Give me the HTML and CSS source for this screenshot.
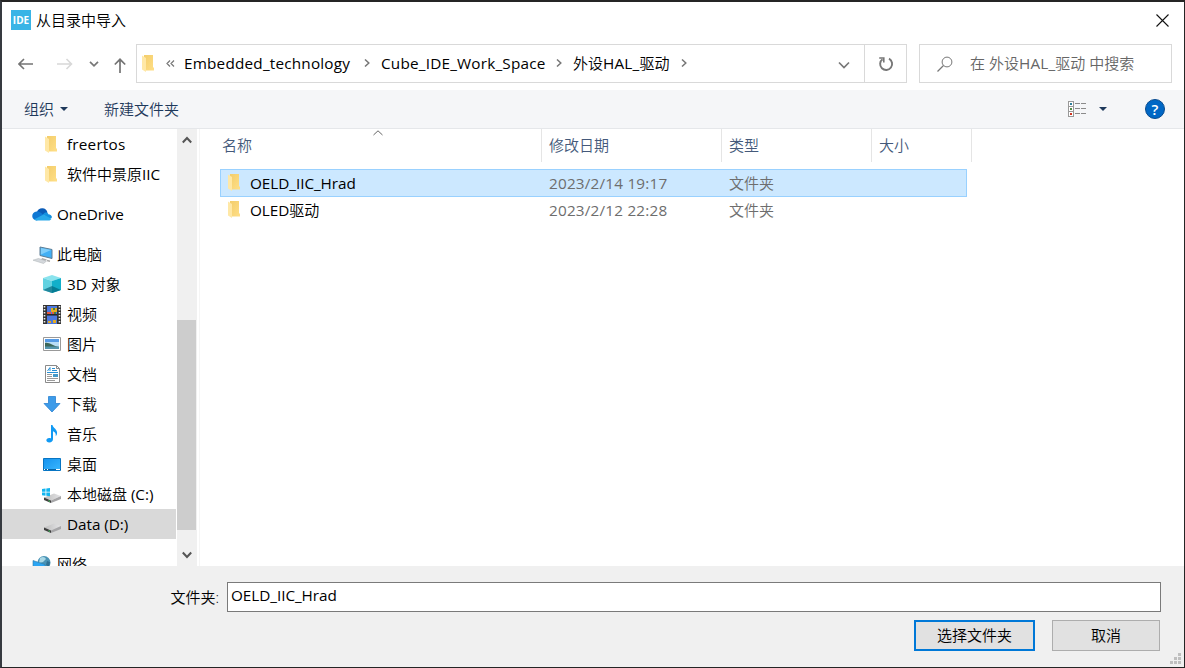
FILE: index.html
```html
<!DOCTYPE html>
<html lang="zh-CN">
<head>
    <meta charset="UTF-8">
    <meta name="viewport" content="width=device-width, initial-scale=1.0">
    <title>从目录中导入</title>
    <link rel="stylesheet" href="styles.css">
</head>
<body>
    <!-- Shared icons -->
    <svg class="defs" width="0" height="0">
        <defs>
            <linearGradient id="fold" x1="0" y1="0" x2="1" y2="1">
                <stop offset="0" stop-color="#f3cd6b"/>
                <stop offset="1" stop-color="#ffdf87"/>
            </linearGradient>
            <linearGradient id="drive-top" x1="0" y1="0" x2="1" y2="0">
                <stop offset="0" stop-color="#bdbdbd"/>
                <stop offset="1" stop-color="#e4e4e6"/>
            </linearGradient>
            <linearGradient id="screen" x1="0" y1="0" x2="1" y2="1">
                <stop offset="0" stop-color="#1592ee"/>
                <stop offset="1" stop-color="#3ab8ff"/>
            </linearGradient>
            <symbol id="folder" viewBox="0 0 12 17">
                <path d="M2 0h9v12l1 1v2.500H4L2 13z" fill="url(#fold)"/>
                <path d="M0 0.500L4 3v14L0 14.500z" fill="#ffe8a6"/>
            </symbol>
            <symbol id="drive" viewBox="0 0 18 10">
                <path d="M1 4.500L11 0.500l7 2.500L8 7.500z" fill="url(#drive-top)"/>
                <path d="M1 4.500l7 3V10l-7-3z" fill="#3e3e3e"/>
                <path d="M8 7.500L18 3v3L8 10z" fill="#a6a6a8"/>
                <path d="M5.500 7.800l1.500.6" stroke="#3fd35f"/>
            </symbol>
        </defs>
    </svg>

    <div class="dialog">
        <div class="title-bar">
            <div class="app-icon">IDE</div>
            <h1>从目录中导入</h1>
            <svg class="close" width="13" height="13" viewBox="0 0 13 13"><path d="M.5.500l12 12M12.500.500l-12 12" stroke="#111" stroke-width="1.100"/></svg>
        </div>

        <div class="nav-bar">
            <div class="nav-buttons">
                <svg width="16" height="12" viewBox="0 0 16 12"><path d="M1 6h14M6 1L1 6l5 5" fill="none" stroke="#747474" stroke-width="1.600"/></svg>
                <svg class="forward" width="16" height="12" viewBox="0 0 16 12"><path d="M0 6h14M9.500 1l5 5-5 5" fill="none" stroke="#d8d8d8" stroke-width="1.600"/></svg>
                <svg class="recent" width="10" height="6" viewBox="0 0 10 6"><path d="M1 .8l4 4 4-4" fill="none" stroke="#777" stroke-width="1.700"/></svg>
                <svg class="up" width="12" height="15" viewBox="0 0 12 15"><path d="M6 15V1.500M.8 6.500L6 1.300l5.200 5.200" fill="none" stroke="#747474" stroke-width="1.700"/></svg>
            </div>
            <div class="address">
                <div class="crumbs">
                    <svg class="folder" width="12" height="17"><use href="#folder"/></svg>
                    <svg class="more" width="9" height="7" viewBox="0 0 9 7"><path d="M4 .5l-3 3 3 3M8 .5l-3 3 3 3" fill="none" stroke="#777" stroke-width="1.200"/></svg>
                    <span class="crumb crumb-1"><span class="en">Embedded_technology</span></span>
                    <svg class="arrow" width="6" height="8" viewBox="0 0 6 8"><path d="M1 .5L4.800 4 1 7.500" fill="none" stroke="#777" stroke-width="1.500"/></svg>
                    <span class="crumb crumb-2"><span class="en">Cube_IDE_Work_Space</span></span>
                    <svg class="arrow" width="6" height="8" viewBox="0 0 6 8"><path d="M1 .5L4.800 4 1 7.500" fill="none" stroke="#777" stroke-width="1.500"/></svg>
                    <span class="crumb crumb-3">外设<span class="en">HAL_</span>驱动</span>
                    <svg class="arrow" width="6" height="8" viewBox="0 0 6 8"><path d="M1 .5L4.800 4 1 7.500" fill="none" stroke="#777" stroke-width="1.500"/></svg>
                </div>
                <svg class="drop" width="12" height="8" viewBox="0 0 12 8"><path d="M1 1.500l5 5 5-5" fill="none" stroke="#777" stroke-width="1.700"/></svg>
                <div class="refresh">
                    <svg width="16" height="16" viewBox="0 0 16 16"><path d="M11 2.700A6 6 0 1 1 4.500 3.200" fill="none" stroke="#777" stroke-width="1.900"/><path d="M1.200 2h4.600v4.600" fill="none" stroke="#777" stroke-width="1.600"/></svg>
                </div>
            </div>
            <div class="search">
                <svg width="16" height="16" viewBox="0 0 16 16"><circle cx="10" cy="6" r="4.900" fill="none" stroke="#777"/><path d="M6.500 9.500L.5 15.500" stroke="#777" stroke-width="1.200"/></svg>
                <span>在 外设<span class="en">HAL_</span>驱动 中搜索</span>
            </div>
        </div>

        <div class="toolbar">
            <span>组织</span>
            <i class="caret"></i>
            <span class="new-folder">新建文件夹</span>
            <svg class="view-icon" width="19" height="16" viewBox="0 0 19 16" shape-rendering="crispEdges">
                <path d="M.5.500h5v15h-5zM.5 5.500h5M.5 10.500h5" fill="#fff" stroke="#999"/>
                <path d="M7 2.500h5m1 0h5M7 7.500h5m1 0h5M7 12.500h5m1 0h5" stroke="#8b8b8b"/>
                <path d="M2 2h2v2H2z" fill="#2f7f9b"/>
                <path d="M2 7h2v2H2z" fill="#548a45"/>
                <path d="M2 12h2v2H2z" fill="#cf3420"/>
            </svg>
            <i class="caret view-caret"></i>
            <div class="help">?</div>
        </div>

        <div class="content">
            <ul class="tree">
                <li class="child"><svg class="folder" width="12" height="17"><use href="#folder"/></svg><span class="en">freertos</span></li>
                <li class="child"><svg class="folder" width="12" height="17"><use href="#folder"/></svg><span>软件中景原<span class="en caps">IIC</span></span></li>
                <li class="root">
                    <svg width="20" height="14" viewBox="0 0 20 14">
                        <path d="M5 5a5.500 5.500 0 0 1 10.500.500L10 10 3 7z" fill="#0a5cb8"/>
                        <path d="M5 13.500A4.500 4.500 0 0 1 4.500 4.500C7 4 9 6 12 8l-7 5.500z" fill="#0f78d4"/>
                        <path d="M11 7.500c1.500-3 5-2.500 5.300-.3 2 .1 3.700 1.500 3.700 3.300L17 12z" fill="#1490df"/>
                        <path d="M2 12.500L11.500 7.500l8 4.200c-.6 1.200-1.500 1.800-3 1.800H5c-1.200 0-2.200-.4-3-1z" fill="#28a8ea"/>
                    </svg>
                    <span class="en caps">OneDrive</span>
                </li>
                <li class="root">
                    <svg class="pc" width="20" height="18" viewBox="0 0 20 18">
                        <path d="M7 1l12 2.500v9L7 9.500z" fill="#42b0f5" stroke="#5e7d94"/>
                        <path d="M8 2l10 2.100L8 8.500z" fill="#80cefa"/>
                        <path d="M9 12l5 1.500-2 1.500-4-1z" fill="#aaa"/>
                        <path d="M0 14.200l5.500-1.700 8 2.500-3 2.500z" fill="#d4d8dc" stroke="#b6babe" stroke-width=".6"/>
                        <path d="M14 14.500l3 .8" stroke="#aaa" stroke-width="1.500"/>
                    </svg>
                    此电脑
                </li>
                <li class="child">
                    <svg width="18" height="18" viewBox="0 0 18 18">
                        <path d="M0 3l9-3 9 3-9 3z" fill="#8ae3ed"/>
                        <path d="M0 3l9 3v12l-9-3z" fill="#62d2e1"/>
                        <path d="M9 6l9-3v12l-9 3z" fill="#12afca"/>
                        <path d="M0 15l9-4v7z" fill="#22889d"/>
                        <path d="M9 11l9 4-9 3z" fill="#067c94"/>
                    </svg>
                    <span><span class="en caps">3D</span> 对象</span>
                </li>
                <li class="child">
                    <svg width="18" height="19" viewBox="0 0 18 19">
                        <path d="M0 0h18v19H0z" fill="#333"/>
                        <path d="M1.500 1v18M16.500 1v18" stroke="#eee" stroke-width="1.600" stroke-dasharray="1.500 1.500"/>
                        <path d="M4 1h10v8H4zM4 10.500h10V19H4z" fill="#4c78df"/>
                        <path d="M4 7h4v2H4zM9 6h3v3H9z" fill="#e8583c"/>
                        <path d="M8 3h6v4H8zM5 16h3v2H5zM10 15h3v3h-3z" fill="#e5ac22"/>
                        <path d="M10 3h2v2h-2zM11 7h2v2h-2z" fill="#46833d"/>
                        <path d="M4 9.700h10" stroke="#252525"/>
                    </svg>
                    视频
                </li>
                <li class="child">
                    <svg width="18" height="14" viewBox="0 0 18 14">
                        <path d="M.5.500h17v13H.5z" fill="#fff" stroke="#999"/>
                        <path d="M2 2h14v10H2z" fill="#b9ddf7"/>
                        <path d="M2 2h14v3H2z" fill="#569be6"/>
                        <path d="M2 6c4-1 8 3 14 4H2z" fill="#3c6759"/>
                        <path d="M2 9.500h14V12H2z" fill="#5595ad"/>
                    </svg>
                    图片
                </li>
                <li class="child">
                    <svg class="narrow" width="15" height="18" viewBox="0 0 15 18">
                        <path d="M.5.500h11l3 3v14H.5z" fill="#fff" stroke="#8a8a8a"/>
                        <path d="M11.500.500v3h3" fill="none" stroke="#8a8a8a"/>
                        <path d="M2.500 6l2.500-3.500V6M7 3.500h3M7 5.500h5M2 7.500h11" fill="none" stroke="#268fd4"/>
                        <path d="M2 9.500h5M2 11.500h5M2 13.500h11M2 15.500h8" stroke="#9a9a9a"/>
                        <path d="M8 9h5v3H8z" fill="#4599c9"/>
                    </svg>
                    文档
                </li>
                <li class="child">
                    <svg width="18" height="17" viewBox="0 0 18 17"><path d="M5.500.500h7v7H17L9 16 1 7.500h4.500z" fill="#3d9be9" stroke="#2a82d2" stroke-width=".8"/></svg>
                    下载
                </li>
                <li class="child">
                    <svg width="18" height="18" viewBox="0 0 18 18"><path d="M8 0h1.500c.3 3 5.500 4.300 4.500 9-.2 1-.7 1.600-1.300 2.200C13.300 8 11.500 7 10 6.200V14c0 2-1.500 3.500-3.700 3.500-3.800 0-4-4.500 0-4.500.7 0 1.200.1 1.700.4z" fill="#119af4"/></svg>
                    音乐
                </li>
                <li class="child">
                    <svg width="18" height="13" viewBox="0 0 18 13">
                        <path d="M.5.500h17v12H.5z" fill="url(#screen)" stroke="#0875c3"/>
                        <path d="M0 11.500h18" stroke="#0963a3"/>
                        <path d="M1 11.500h1M4 11.500h1M13 11.500h4" stroke="#fff"/>
                    </svg>
                    桌面
                </li>
                <li class="child">
                    <svg class="disk-c" width="19" height="15" viewBox="0 0 19 15">
                        <svg x="1" y="5" width="18" height="10" viewBox="0 0 18 10"><use href="#drive"/></svg>
                        <path d="M0 1l3.500-.5v3.200H0zM4.300.4L8 0v3.700H4.300zM0 4.500h3.500v3.200L0 7.300zM4.300 4.500H8V8.200l-3.700-.4z" fill="#13b5ef"/>
                    </svg>
                    <span>本地磁盘 <span class="en caps">(C:)</span></span>
                </li>
                <li class="child selected"><svg class="disk-d" width="18" height="10"><use href="#drive"/></svg><span class="en caps">Data (D:)</span></li>
                <li class="root">
                    <svg class="network" width="20" height="19" viewBox="0 0 20 19">
                        <circle cx="12" cy="7.500" r="6.500" fill="#4a93b5"/>
                        <path d="M8 3c3-2 5-1 6 1l-3 3-4 1z" fill="#a9d8e6"/>
                        <path d="M15 6l3 1-1 5-3-2z" fill="#2f6f93"/>
                        <path d="M1 5.500l12 4v9L1 15z" fill="#2ba5f3" stroke="#3178a5" stroke-width=".6"/>
                    </svg>
                    网络
                </li>
            </ul>

            <div class="scrollbar">
                <svg width="10" height="8" viewBox="0 0 10 8"><path d="M.8 6.500L5 2l4.200 4.500" fill="none" stroke="#555" stroke-width="2"/></svg>
                <div class="thumb"></div>
                <svg width="10" height="8" viewBox="0 0 10 8"><path d="M.8 1.500L5 6l4.200-4.500" fill="none" stroke="#555" stroke-width="2"/></svg>
            </div>

            <div class="files">
                <div class="file-head">
                    <div>名称
                        <svg class="sort" width="10" height="6" viewBox="0 0 10 6"><path d="M.5 5L5 .8 9.500 5" fill="none" stroke="#666"/></svg>
                    </div>
                    <div>修改日期</div>
                    <div>类型</div>
                    <div>大小</div>
                </div>
                <div class="file-row active">
                    <div class="name"><svg width="12" height="17"><use href="#folder"/></svg><span class="en caps">OELD_IIC_Hrad</span></div>
                    <div><span class="en date">2023/2/14 19:17</span></div>
                    <div>文件夹</div>
                </div>
                <div class="file-row">
                    <div class="name"><svg width="12" height="17"><use href="#folder"/></svg><span><span class="en caps">OLED</span>驱动</span></div>
                    <div><span class="en date">2023/2/12 22:28</span></div>
                    <div>文件夹</div>
                </div>
            </div>
        </div>

        <div class="footer">
            <div class="field">
                <label for="folder-name">文件夹:</label>
                <input type="text" id="folder-name" class="en caps" value="OELD_IIC_Hrad">
            </div>
            <div class="actions">
                <button class="primary">选择文件夹</button>
                <button>取消</button>
            </div>
            <svg class="grip" width="11" height="11" viewBox="0 0 11 11" fill="#bfbfbf"><path d="M8 0h3v3H8zM4 4h3v3H4zM8 4h3v3H8zM0 8h3v3H0zM4 8h3v3H4zM8 8h3v3H8z"/></svg>
        </div>
    </div>
</body>
</html>
```
FILE: styles.css
```css
* {
    box-sizing: border-box;
    margin: 0;
    padding: 0;
}

body {
    width: 1185px;
    height: 668px;
    overflow: hidden;
    font-family: "Open Sans", "Noto Sans CJK SC", sans-serif;
    font-size: 15px;
    font-weight: 350;
    line-height: 20px;
    color: #000;
}

svg {
    display: block;
    flex-shrink: 0;
}

.defs {
    position: absolute;
}

.en {
    font-size: 15.3px;
    font-weight: 400;
    letter-spacing: 0.2px;
}

.caps {
    letter-spacing: -0.05px;
}

.dialog {
    height: 668px;
    display: flex;
    flex-direction: column;
    background: #fff;
    border: 1px solid #252525;
    border-width: 2px 1px 1px 2px;
    border-left-color: #363a40;
}

.title-bar {
    height: 42px;
    padding: 0 15px 6px 9px;
    display: flex;
    align-items: center;
}

.app-icon {
    width: 20px;
    height: 20px;
    background: #39b4e6;
    color: #fff;
    font: bold 10px/20px "Open Sans", sans-serif;
    text-align: center;
}

h1 {
    margin-left: 5px;
    font-size: 15px;
    font-weight: 350;
}

.close {
    margin-left: auto;
}

.nav-bar {
    height: 46px;
    padding-right: 12px;
    display: flex;
}

.nav-buttons {
    width: 134px;
    height: 39px;
    padding-left: 16px;
    display: flex;
    align-items: center;
}

.forward {
    margin-left: 23px;
}

.recent {
    margin-left: 16px;
}

.up {
    margin: 3px 0 0 15px;
}

.address {
    width: 771px;
    height: 39px;
    display: flex;
    align-items: center;
    border: 1px solid #d9d9d9;
}

.crumbs {
    flex: 1;
    padding-left: 5px;
    display: flex;
    align-items: center;
}

.more {
    margin: 0 9px 0 12px;
}

.crumb {
    padding-bottom: 2px;
}

.crumb-1 {
    width: 180px;
}

.crumb-2 {
    width: 175px;
}

.crumb-3 {
    width: 108px;
}

.arrow {
    margin-right: 11px;
}

.crumb + .arrow {
    margin-top: -2px;
}

.drop {
    margin: 2px 14px 0 0;
}

.refresh {
    width: 42px;
    height: 37px;
    display: flex;
    align-items: center;
    justify-content: center;
    border-left: 1px solid #d9d9d9;
}

.search {
    flex: 1;
    height: 39px;
    margin-left: 12px;
    padding-left: 17px;
    display: flex;
    align-items: center;
    gap: 17px;
    border: 1px solid #d9d9d9;
    color: #666;
}

.search span {
    margin-top: -1px;
}

.toolbar {
    height: 39px;
    padding: 0 19px 0 22px;
    display: flex;
    align-items: center;
    background: #f5f6f8;
    border-bottom: 1px solid #e5e7ea;
    color: #1e395b;
}

.caret {
    margin-left: 6px;
    border: 4px solid transparent;
    border-top: 4px solid #1e395b;
    border-bottom: 0;
}

.new-folder {
    margin-left: 36px;
}

.view-icon {
    margin-left: auto;
}

.view-caret {
    margin-left: 12px;
}

.help {
    width: 20px;
    height: 20px;
    margin-left: 38px;
    background: #0067c5;
    border: 1px solid #084b8f;
    border-radius: 50%;
    color: #fff;
    font: 600 15px/18px "Open Sans", sans-serif;
    text-align: center;
}

.content {
    height: 437px;
    display: flex;
    overflow: hidden;
}

.tree {
    width: 175px;
    list-style: none;
}

.tree li {
    height: 30px;
    width: 174px;
    display: flex;
    align-items: center;
    white-space: nowrap;
}

.child {
    padding-left: 41px;
    gap: 6px;
}

.child .folder {
    margin: 0 4px 0 2px;
}

.narrow {
    margin: 0 1px 0 2px;
}

.disk-c {
    margin: 3px 0 0 -1px;
}

.disk-d {
    margin-top: 7px;
}

.root {
    padding-left: 30px;
    gap: 5px;
}

.child + .root,
.root + .root {
    margin-top: 10px;
}

.pc {
    margin: 1px -1px 0 1px;
}

.network {
    margin-top: 1px;
}

.selected {
    background: #d9d9d9;
}

.scrollbar {
    width: 20px;
    padding: 7px 1px 7px 0;
    display: flex;
    flex-direction: column;
    align-items: center;
    background: #f0f0f0;
}

.thumb {
    width: 19px;
    height: 210px;
    margin: 176px 0 21px;
    background: #cdcdcd;
}

.files {
    flex: 1;
    margin-left: 2px;
    padding-left: 13px;
    border-left: 1px solid #f5f5f5;
}

.file-head {
    height: 33px;
    margin-bottom: 7px;
    display: grid;
    grid-template-columns: 329px 180px 150px 100px;
    color: #44597a;
}

.file-head div {
    position: relative;
    padding: 6px 0 0 7px;
    border-right: 1px solid #e5e5e5;
}

.file-head div:first-child {
    padding-left: 9px;
}

.sort {
    position: absolute;
    left: 160px;
    top: 1px;
}

.file-row {
    width: 747px;
    height: 28px;
    margin: 0 0 -1px 7px;
    padding-left: 7px;
    display: grid;
    grid-template-columns: 321px 180px 150px;
    align-items: center;
    border: 1px solid transparent;
    color: #6d6d6d;
}

.file-row.active {
    background: #cce8ff;
    border-color: #99d1ff;
}

.name {
    display: flex;
    align-items: center;
    gap: 10px;
    color: #000;
}

.name svg {
    margin-top: -2px;
}

.footer {
    position: relative;
    flex: 1;
    padding: 16px 23px 0 0;
    background: #f0f0f0;
}

.field {
    display: flex;
    justify-content: flex-end;
    align-items: center;
    gap: 8px;
}

.field input {
    width: 934px;
    height: 30px;
    padding: 0 3px 4px;
    border: 1px solid #7a7a7a;
    background: #fff;
    font-family: inherit;
    color: #000;
}

.actions {
    margin: 8px 1px 0 0;
    display: flex;
    justify-content: flex-end;
    gap: 17px;
}

button {
    width: 108px;
    height: 31px;
    padding-bottom: 1px;
    background: #e1e1e1;
    border: 1px solid #adadad;
    font: inherit;
    color: #000;
}

.primary {
    width: 121px;
    border: 2px solid #0078d7;
}

.grip {
    position: absolute;
    right: 3px;
    bottom: 3px;
}
```
